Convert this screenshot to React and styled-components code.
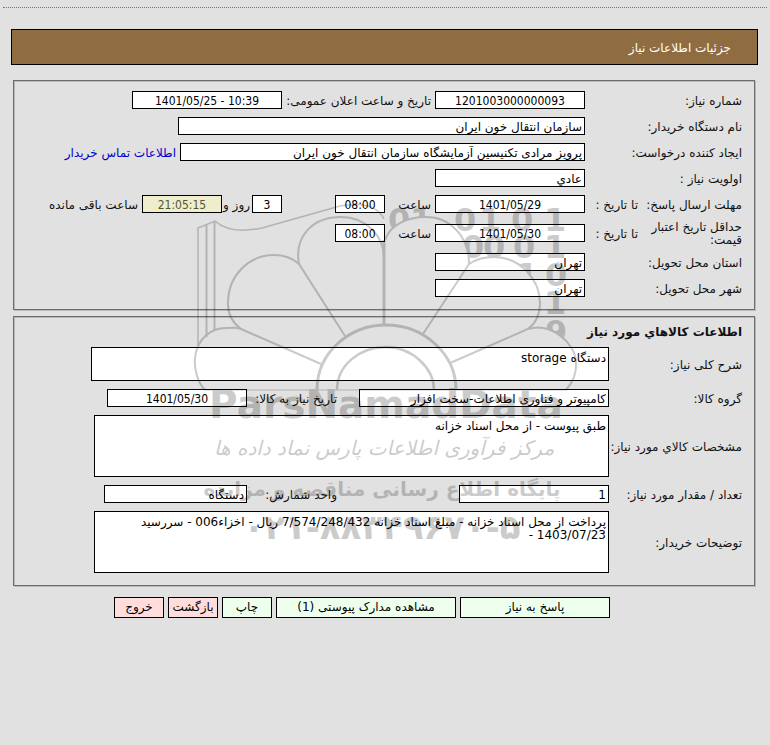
import React from 'react'
import styled, { createGlobalStyle } from 'styled-components'

const GlobalStyle = createGlobalStyle`
  * { box-sizing: border-box; }
  body {
    margin: 0;
    background: #e1e1e1;
    color: #111;
    font-family: "DejaVu Sans", sans-serif;
    font-size: 12px;
    line-height: 13px;
  }
  input, textarea, button { font: inherit; color: #000; }
`

const Page = styled.main`
  position: relative;
  padding: 7px 3px 24px;
`
const Divider = styled.hr`
  margin: 0;
  border: 0;
  border-top: 1px dotted #777;
`
const Title = styled.h1`
  margin: 21px 9px 15px 8px;
  padding: 0 26px;
  height: 36px;
  border: 1px solid #000;
  background: #8f6d41;
  color: #fff;
  font-size: 12px;
  font-weight: normal;
  line-height: 36px;
`
const Panel = styled.section`
  margin: 0 12px 6px 10px;
  padding: ${(p) => p.$pad};
  border: 1px solid #6c6c6c;
  box-shadow: inset 1px 1px 0 #b8b8b8, 1px 1px 0 #b8b8b8;
  display: flex;
  flex-direction: column;
  gap: 8px;
`
const PanelTitle = styled.h2`
  margin: 0;
  font-size: 12px;
  font-weight: bold;
  line-height: 13px;
`
const Row = styled.div`
  display: flex;
  align-items: center;
  height: ${(p) => p.$h || 18}px;
`
// label slot: $w is the width, $start the gap before its text
const Label = styled.label`
  flex: none;
  width: ${(p) => p.$w}px;
  padding-top: 2px;
  padding-inline-start: ${(p) => p.$start || 0}px;
  white-space: ${(p) => (p.$wrap ? 'normal' : 'nowrap')};
`
const Field = styled.input`
  width: ${(p) => p.$w}px;
  height: 18px;
  margin: 0;
  padding: 1px 2px 0;
  border: 1px solid #000;
  border-radius: 0;
  background: #fff;
  text-align: start;
`
// numbers and dates, always read left to right
const NumberField = styled(Field).attrs({ dir: 'ltr', readOnly: true })`
  margin-right: ${(p) => p.$gap || 0}px;
  background: ${(p) => (p.$timer ? '#eeeecc' : '#fff')};
  color: ${(p) => (p.$timer ? '#555533' : '#000')};
  font-family: "DejaVu Sans Condensed", "DejaVu Sans", sans-serif;
  text-align: center;
`
const Area = styled.textarea`
  display: block;
  width: ${(p) => p.$w}px;
  height: ${(p) => p.$h}px;
  margin: 0;
  padding: 4px 2px;
  border: 1px solid #000;
  border-radius: 0;
  background: #fff;
  resize: none;
  overflow: hidden;
`
const Link = styled.a`
  margin-inline-start: 4px;
  padding-top: 2px;
  color: #0000cc;
  text-decoration: none;
`
const Actions = styled.div`
  display: flex;
  gap: 4px;
  margin-top: 11px;
  padding-inline-start: 157px;
`
const Button = styled.button`
  width: ${(p) => p.$w}px;
  height: 21px;
  padding: 0;
  border: 1px solid #000;
  background: ${(p) => (p.$leave ? '#ffdddd' : '#eeffee')};
  white-space: nowrap;
`
const Overlay = styled.div`
  position: absolute;
  inset: 200px 0 auto;
  display: flex;
  justify-content: center;
  pointer-events: none;
  opacity: 0.2;
`

function Watermark() {
  return (
    <Overlay aria-hidden="true">
      <svg width="400" height="350" viewBox="185 200 400 350" direction="ltr">
        <defs>
          <clipPath id="behind-petals">
            <path d="M385 200H580V362H576C575 342 550 322 528 329Q540 320 540 303C540 280 520 257 494 257Q479 257 469 264C469 236 450 217 426 217C407 217 390 225 385 240Z" />
          </clipPath>
        </defs>
        <g fill="none" stroke="#000" strokeWidth="2">
          <path d="M198 345V228L215 221C226 231 243 232 262 228L340 206C362 202 377 205 384 219" strokeWidth="1.5" />
          <path d="M206.500 337V225M214.500 331V221" />
          <path d="M205 390C197 382 194 367 195 358C197 338 212 327 228 328Q236 327 241 329L321 364" />
          <path d="M241 329C226 318 228 303 228 301C229 275 249 255 274 255Q289 255 299 264L345 336" />
          <path d="M299 264C294 237 312 217 341 217C366 217 384 236 384 258" />
          <path d="M384 240V325" strokeWidth="3" />
          <path d="M385 240C390 225 407 217 426 217C450 217 469 236 469 264L423 334" />
          <path d="M469 264Q479 257 494 257C520 257 540 280 540 303Q540 320 528 329L450 363" />
          <path d="M528 329C550 322 575 342 576 362Q577 378 566 390" />
          <path d="M317 390C317 352 350 325 386 325C424 325 456 354 456 390" strokeWidth="3" />
          <path d="M337 390C337 365 360 347 386 347C412 347 434 368 434 390" strokeWidth="2.500" />
          <path d="M205 390H567" strokeWidth="1" />
        </g>
        <g fill="#000" fontFamily="DejaVu Sans" fontWeight="bold" fontSize="32" clipPath="url(#behind-petals)">
          <text x="388 410 454 479 511 544" y="231">010101</text>
          <text x="462 483 513 544" y="258">0001</text>
          <text x="516 545" y="286">10</text>
          <text x="544" y="314">1</text>
          <text x="545" y="343">9</text>
        </g>
        <text x="386" y="418" fill="#000" fontFamily="DejaVu Sans" fontWeight="bold" fontSize="39" textAnchor="middle">ParsNamadData</text>
        <g fill="#000" fontFamily="DejaVu Sans" textAnchor="middle" direction="rtl">
          <text x="384" y="455" fontSize="20" fontStyle="italic">مرکز فرآوری اطلاعات پارس نماد داده ها</text>
          <text x="382" y="496" fontSize="20" fontWeight="bold">پایگاه اطلاع رسانی مناقصه و مزایده</text>
        </g>
        <text x="382" y="539" fill="#000" fontFamily="DejaVu Sans" fontWeight="bold" fontSize="34" textAnchor="middle">۰۲۱-۸۸۳۴۹۶۷۰-۵</text>
      </svg>
    </Overlay>
  )
}

export default function App() {
  return (
    <Page dir="rtl" lang="fa">
      <GlobalStyle />
      <Divider />
      <Title>جزئیات اطلاعات نیاز</Title>

      <Panel $pad="10px 12px 12px">
        <Row>
          <Label htmlFor="number" $w={157}>شماره نیاز:</Label>
          <NumberField id="number" $w={150} value="1201003000000093" />
          <Label htmlFor="announced" $w={153} $start={4}>تاریخ و ساعت اعلان عمومی:</Label>
          <NumberField id="announced" $w={150} value="1401/05/25 - 10:39" />
        </Row>
        <Row>
          <Label htmlFor="buyer" $w={157}>نام دستگاه خریدار:</Label>
          <Field id="buyer" $w={407} readOnly value="سازمان انتقال خون ایران" />
        </Row>
        <Row>
          <Label htmlFor="creator" $w={157}>ایجاد کننده درخواست:</Label>
          <Field id="creator" $w={405} readOnly value="پرویز مرادی تکنیسین آزمایشگاه سازمان انتقال خون ایران" />
          <Link href="#contact">اطلاعات تماس خریدار</Link>
        </Row>
        <Row>
          <Label htmlFor="priority" $w={157}>اولویت نیاز :</Label>
          <Field id="priority" $w={150} readOnly value="عادي" />
        </Row>
        <Row>
          <Label htmlFor="reply-date" $w={104}>مهلت ارسال پاسخ:</Label>
          <Label htmlFor="reply-date" $w={53}>تا تاریخ :</Label>
          <NumberField id="reply-date" $w={150} value="1401/05/29" />
          <Label htmlFor="reply-time" $w={50} $start={4}>ساعت</Label>
          <NumberField id="reply-time" $w={50} value="08:00" />
          <NumberField id="days" aria-label="روز" $w={30} $gap={53} value="3" />
          <Label htmlFor="timer" $w={30} $start={2}>روز و</Label>
          <NumberField id="timer" $w={80} $timer value="21:05:15" />
          <Label htmlFor="timer" $w={100} $start={4}>ساعت باقی مانده</Label>
        </Row>
        <Row $h={24}>
          <Label htmlFor="valid-date" $w={104} $wrap>حداقل تاریخ اعتبار قیمت:</Label>
          <Label htmlFor="valid-date" $w={53}>تا تاریخ :</Label>
          <NumberField id="valid-date" $w={150} value="1401/05/30" />
          <Label htmlFor="valid-time" $w={50} $start={4}>ساعت</Label>
          <NumberField id="valid-time" $w={50} value="08:00" />
        </Row>
        <Row>
          <Label htmlFor="province" $w={157}>استان محل تحویل:</Label>
          <Field id="province" $w={150} readOnly value="تهران" />
        </Row>
        <Row>
          <Label htmlFor="city" $w={157}>شهر محل تحویل:</Label>
          <Field id="city" $w={150} readOnly value="تهران" />
        </Row>
      </Panel>

      <Panel $pad="9px 12px 12px">
        <PanelTitle>اطلاعات كالاهاي مورد نیاز</PanelTitle>
        <Row $h={34}>
          <Label htmlFor="summary" $w={133}>شرح کلی نیاز:</Label>
          <Area id="summary" $w={518} $h={34} readOnly value="دستگاه storage" />
        </Row>
        <Row>
          <Label htmlFor="group" $w={133}>گروه کالا:</Label>
          <Field id="group" $w={250} readOnly value="کامپیوتر و فناوری اطلاعات-سخت افزار" />
          <Label htmlFor="need-date" $w={112} $start={22}>تاریخ نیاز به کالا:</Label>
          <NumberField id="need-date" $w={140} value="1401/05/30" />
        </Row>
        <Row $h={62}>
          <Label htmlFor="specs" $w={133}>مشخصات كالاي مورد نیاز:</Label>
          <Area id="specs" $w={515} $h={62} readOnly value="طبق پیوست - از محل اسناد خزانه" />
        </Row>
        <Row>
          <Label htmlFor="amount" $w={133}>تعداد / مقدار مورد نیاز:</Label>
          <Field id="amount" $w={150} readOnly value="1" />
          <Label htmlFor="unit" $w={212} $start={122}>واحد شمارش:</Label>
          <Field id="unit" $w={143} readOnly value="دستگاه" />
        </Row>
        <Row $h={62}>
          <Label htmlFor="notes" $w={133}>توضیحات خریدار:</Label>
          <Area
            id="notes"
            $w={515}
            $h={62}
            readOnly
            value="پرداخت از محل اسناد خزانه - مبلغ اسناد خزانه 7/574/248/432 ریال - اخزاء006 - سررسید 1403/07/23 -"
          />
        </Row>
      </Panel>

      <Actions>
        <Button type="button" $w={150}>پاسخ به نیاز</Button>
        <Button type="button" $w={180}>مشاهده مدارک پیوستی (1)</Button>
        <Button type="button" $w={50}>چاپ</Button>
        <Button type="button" $w={50} $leave>بازگشت</Button>
        <Button type="button" $w={50} $leave>خروج</Button>
      </Actions>

      <Watermark />
    </Page>
  )
}
